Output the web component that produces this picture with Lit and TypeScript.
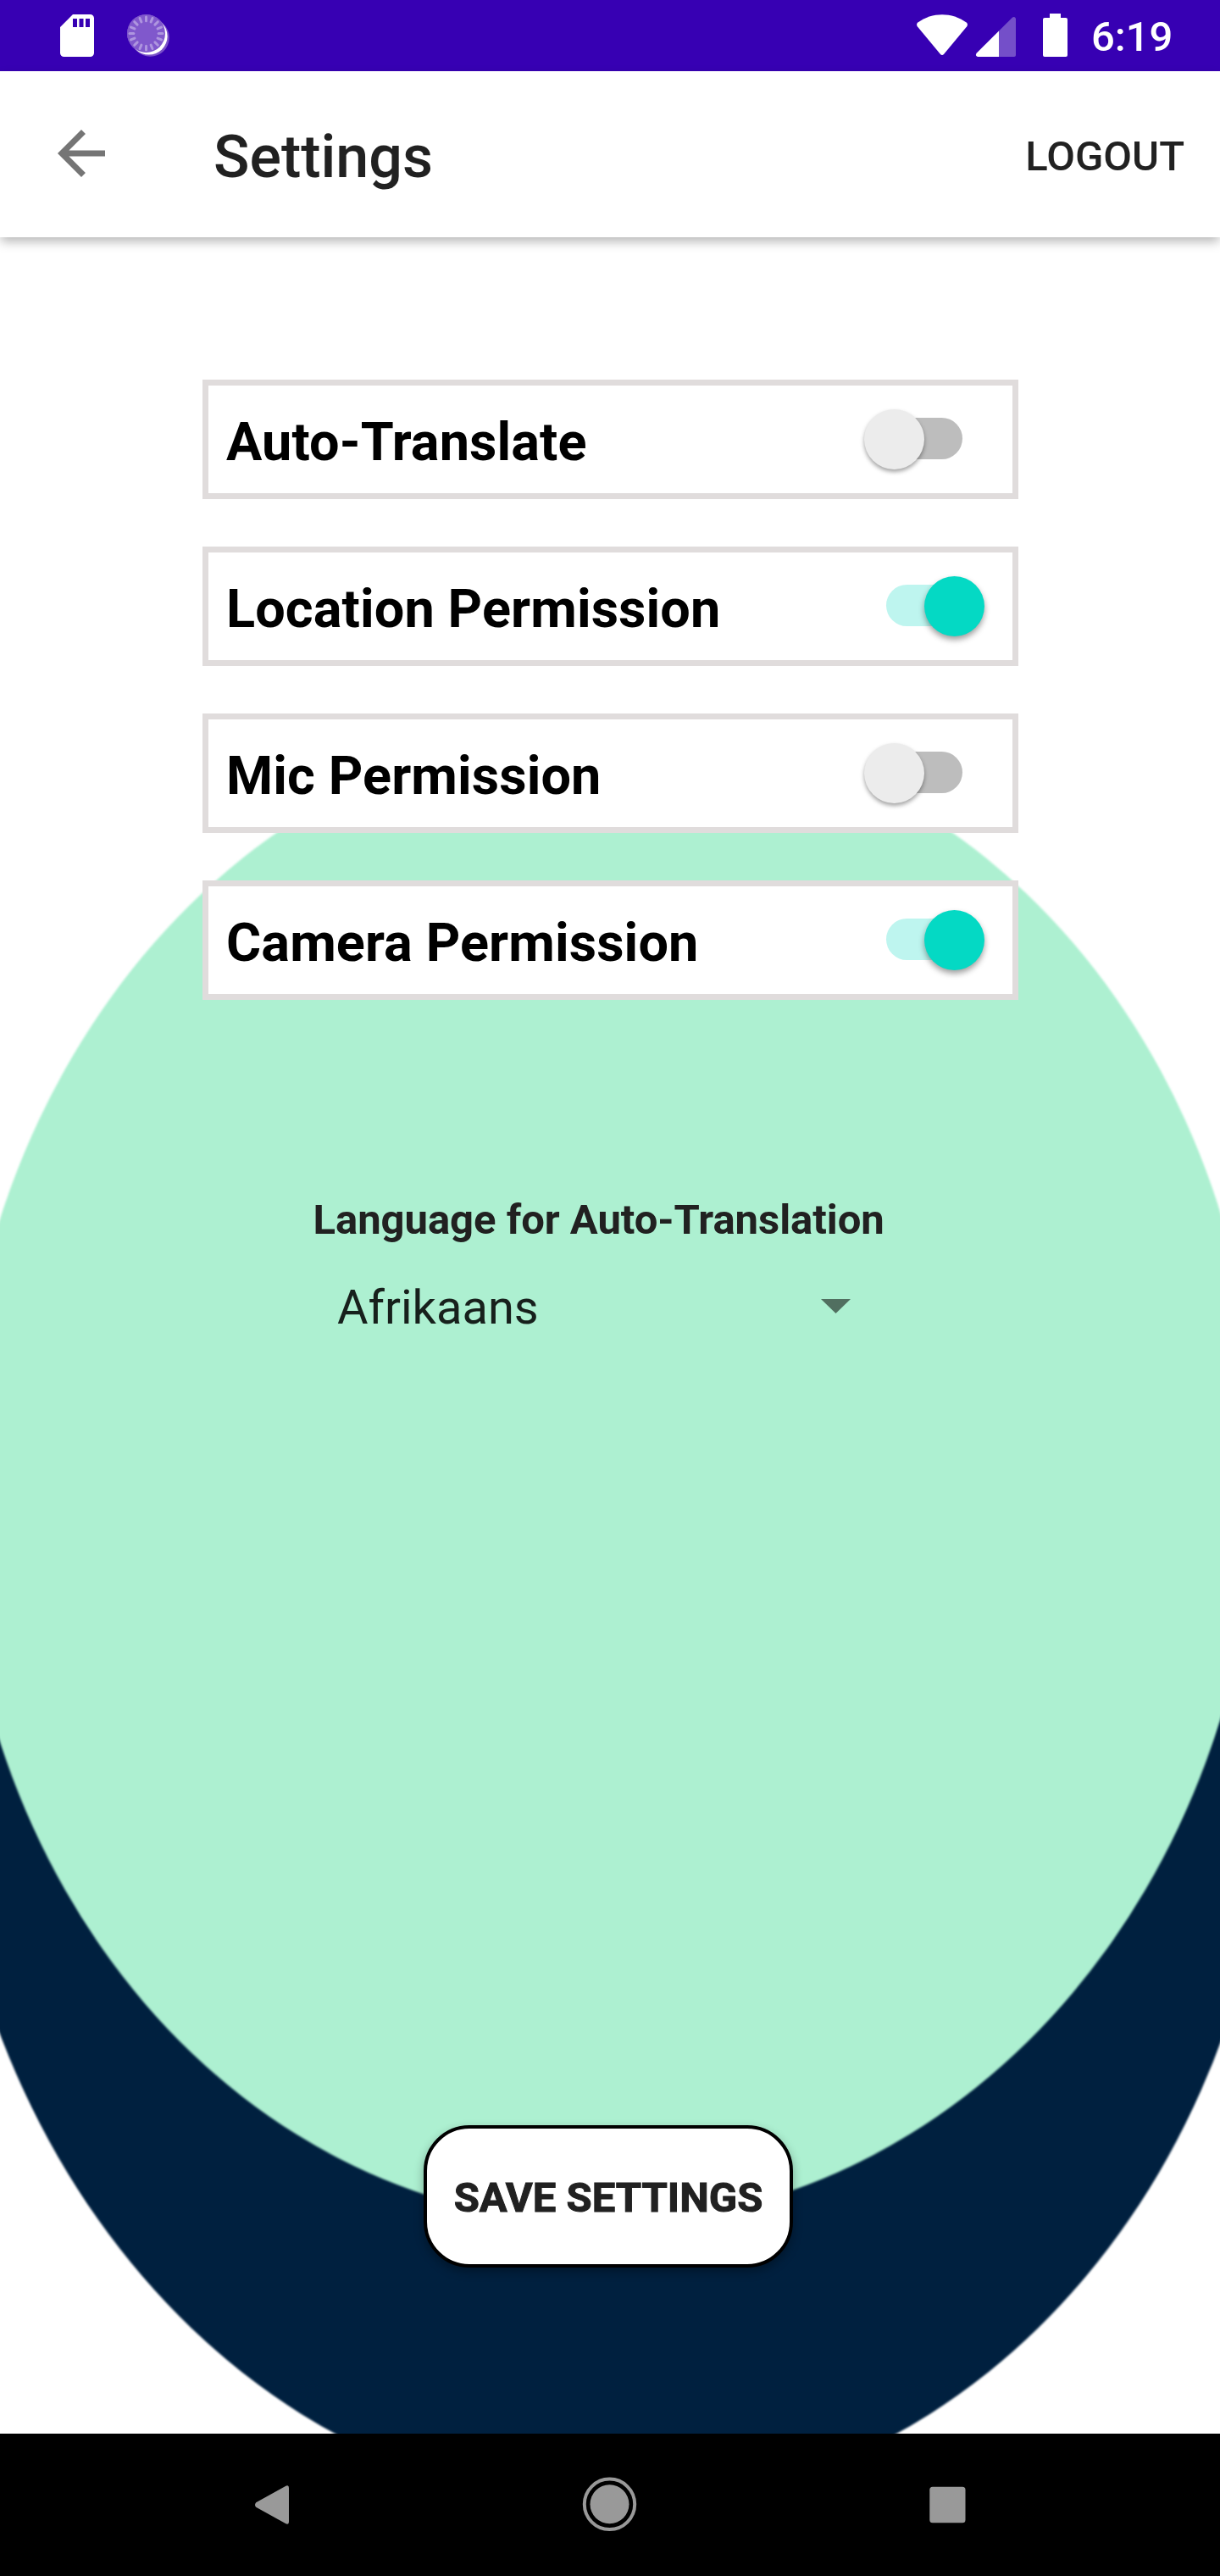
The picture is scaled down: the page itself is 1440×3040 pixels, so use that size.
import { LitElement, html, css, svg } from "lit";
import { customElement, property, state } from "lit/decorators.js";

@customElement("status-bar")
class StatusBar extends LitElement {
  static styles = css`
    :host {
      display: flex;
      align-items: flex-start;
      justify-content: space-between;
      height: 84px;
      background: #3700b3;
      color: #fff;
    }
    .group { display: flex; height: 84px; }
    .icons { display: block; }
    .time {
      width: 152px;
      padding-top: 4px;
      font-size: 49px;
      font-weight: 500;
      line-height: 80px;
      white-space: nowrap;
    }
  `;

  render() {
    const ticks = Array.from({ length: 16 }, (_, i) => i * 22.5);
    return html`
      <div class="group">
        <svg class="icons" width="210" height="84" viewBox="0 0 210 84">
          <path
            fill="#fff"
            fill-rule="evenodd"
            d="M86 17H106.500a4.500 4.500 0 0 1 4.500 4.500V62.500a4.500 4.500 0 0 1-4.500 4.500H75.500a4.500 4.500 0 0 1-4.500-4.500V32Z
               M86 22v10h5V22ZM93.500 22v10h5V22ZM101 22v10h5V22Z"
          />
          <path d="M172.500 39.500L177.300 44.300" stroke="#7a50c9" stroke-width="45" stroke-linecap="round" />
          <circle cx="175.700" cy="42.700" r="21.900" fill="#fff" />
          <circle cx="172.500" cy="39.500" r="22.500" fill="#8058cc" />
          <g stroke="#ae95df" stroke-width="3" stroke-linecap="round">
            ${ticks.map((a) => svg`<path d="M172.500 20v4.800" transform="rotate(${a} 172.500 39.500)" />`)}
          </g>
        </svg>
      </div>
      <div class="group">
        <svg class="icons" width="208" height="84" viewBox="1080 0 208 84">
          <path fill="#fff" d="M1083.400 26.600C1100 14 1124 14 1140.600 26.600Q1143 28.800 1141.200 31.200L1114.200 63.800Q1112 66.200 1109.800 63.800L1082.800 31.200Q1081 28.800 1083.400 26.600Z" />
          <path fill="#fff" d="M1179 36.500V67H1154q-3.400-1.200-1.400-4.200Z" />
          <path fill="#744fc9" d="M1179 36.500L1194.800 20.700q3-1.800 4.200 1.300V65q0 2-2 2H1179Z" />
          <path fill="#fff" d="M1239 16h13v5h6q2 0 2 2v42q0 2-2 2h-25q-2 0-2-2V23q0-2 2-2h6Z" />
        </svg>
        <span class="time">6:19</span>
      </div>
    `;
  }
}

@customElement("app-bar")
class AppBar extends LitElement {
  static styles = css`
    :host {
      display: flex;
      align-items: center;
      height: 196px;
      box-sizing: border-box;
      padding: 0 42px 0 54px;
      background: #fff;
      box-shadow: 0 6px 12px -1px rgba(0, 0, 0, 0.29);
      color: #212121;
      position: relative;
      z-index: 1;
    }
    .back { display: block; margin-bottom: 3px; }
    .title {
      flex: 1;
      margin-left: 114px;
      padding-top: 6px;
      font-size: 70px;
      font-weight: 500;
      line-height: 90px;
    }
    .action {
      padding-top: 5px;
      font-size: 49px;
      font-weight: 500;
      line-height: 60px;
    }
  `;

  render() {
    return html`
      <svg class="back" width="84" height="84" viewBox="0 0 24 24">
        <path fill="#757575" d="M20 11H7.830l5.590-5.590L12 4l-8 8 8 8 1.410-1.410L7.830 13H20v-2z" />
      </svg>
      <span class="title">Settings</span>
      <span class="action">LOGOUT</span>
    `;
  }
}

@customElement("toggle-switch")
class ToggleSwitch extends LitElement {
  @property({ type: Boolean, reflect: true }) on = false;

  static styles = css`
    :host { display: block; width: 146px; height: 72px; }
    .field {
      display: flex;
      align-items: center;
      width: 90px;
      height: 49px;
      margin: 10px 0 0 27px;
      border-radius: 25px;
      background: #bdbdbd;
    }
    .thumb {
      flex: none;
      width: 71px;
      height: 71px;
      margin: 2px 0 0 -26px;
      border-radius: 50%;
      background: #ececec;
      box-shadow: 0 3px 5px rgba(0, 0, 0, 0.36);
    }
    :host([on]) .field { background: #bef5ef; }
    :host([on]) .thumb {
      margin-left: 45px;
      background: #04d9c4;
      box-shadow: 0 4px 7px rgba(0, 0, 0, 0.38);
    }
  `;

  render() {
    return html`<div class="field"><div class="thumb"></div></div>`;
  }
}

interface Setting {
  label: string;
  on: boolean;
}

@customElement("app-root")
class AppRoot extends LitElement {
  @state() private settings: Setting[] = [
    { label: "Auto-Translate", on: false },
    { label: "Location Permission", on: true },
    { label: "Mic Permission", on: false },
    { label: "Camera Permission", on: true },
  ];

  static styles = css`
    :host {
      display: flex;
      flex-direction: column;
      width: 1440px;
      height: 3040px;
      overflow: hidden;
      background: #fff;
      font-family: Roboto, "Liberation Sans", sans-serif;
    }
    .content {
      position: relative;
      isolation: isolate;
      display: flex;
      flex-direction: column;
      align-items: center;
      height: 2592px;
      box-sizing: border-box;
      padding-top: 168px;
    }
    .backdrop { position: absolute; left: 0; top: 0; z-index: -1; }
    .disc { filter: blur(1px); }
    .rows {
      display: flex;
      flex-direction: column;
      gap: 56px;
      width: 963px;
    }
    .row {
      display: flex;
      align-items: flex-start;
      justify-content: space-between;
      height: 141px;
      box-sizing: border-box;
      border: 7px solid #e0dcdc;
      background: #fff;
      padding: 28px 30px 0 21px;
    }
    .label {
      padding: 3px 0 0 0.5px;
      font-size: 63px;
      font-weight: 700;
      line-height: 72px;
      letter-spacing: 0.1px;
      color: #000;
      white-space: nowrap;
    }
    .language {
      display: flex;
      flex-direction: column;
      width: 704px;
      margin-top: 230px;
      color: #212121;
    }
    .caption {
      padding-left: 1.5px;
      font-size: 49px;
      font-weight: 700;
      line-height: 60px;
      letter-spacing: -0.04px;
      white-space: nowrap;
    }
    .select {
      display: flex;
      align-items: center;
      justify-content: space-between;
      margin-top: 38px;
      padding: 0 68px 0 30px;
      font-size: 56px;
      line-height: 70px;
      color: #17201c;
    }
    .caret { margin-bottom: 3px; }
    .save {
      display: flex;
      align-items: center;
      justify-content: center;
      width: 436px;
      height: 168px;
      box-sizing: border-box;
      margin: 930px 4px 0 0;
      padding-top: 4px;
      border: 4px solid #000;
      border-radius: 54px;
      background: #fff;
      box-shadow: 0 5px 12px rgba(0, 0, 0, 0.32);
      font-size: 49px;
      font-weight: 700;
      line-height: 60px;
      color: #212121;
      -webkit-text-stroke: 1px #212121;
      white-space: nowrap;
    }
    .nav { height: 168px; background: #000; }
    .nav svg { display: block; }
  `;

  render() {
    return html`
      <status-bar></status-bar>
      <app-bar></app-bar>
      <main class="content">
        <svg class="backdrop" width="1440" height="2592" viewBox="0 280 1440 2592">
          <ellipse class="disc" rx="787.6" ry="928.2" fill="#00203f" transform="matrix(1 0 0.010 1 718.400 2030)" />
          <ellipse class="disc" rx="766.8" ry="885.1" fill="#adf0d1" transform="matrix(1 0 -0.0089 1 718.700 1738.500)" />
        </svg>
        <div class="rows">
          ${this.settings.map(
            (s) => html`
              <div class="row">
                <span class="label">${s.label}</span>
                <toggle-switch ?on=${s.on}></toggle-switch>
              </div>
            `
          )}
        </div>
        <div class="language">
          <span class="caption">Language for Auto-Translation</span>
          <div class="select">
            <span>Afrikaans</span>
            <svg class="caret" width="35" height="17" viewBox="0 0 35 17"><path fill="#516f60" d="M0 0H35L17.500 17Z" /></svg>
          </div>
        </div>
        <div class="save">SAVE SETTINGS</div>
      </main>
      <footer class="nav">
        <svg width="1440" height="168" viewBox="0 2872 1440 168">
          <path fill="#999" d="M302.200 2953.200L336.500 2934.200Q341 2931.500 341 2936V2976Q341 2980.500 336.500 2977.800L302.200 2958.800Q299.800 2956 302.200 2953.200Z" />
          <circle cx="719.500" cy="2955.300" r="29.700" fill="none" stroke="#999" stroke-width="4" />
          <circle cx="719.500" cy="2955.300" r="23" fill="#999" />
          <rect x="1097.300" y="2934.700" width="42.200" height="42.600" rx="3.500" fill="#999" />
        </svg>
      </footer>
    `;
  }
}
